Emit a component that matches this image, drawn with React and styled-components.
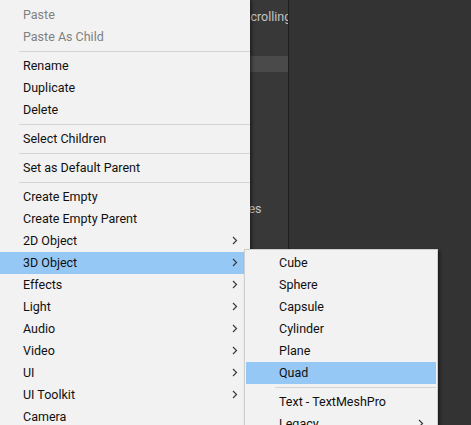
import React from "react";
import styled, { createGlobalStyle } from "styled-components";

const Global = createGlobalStyle`
  html, body {
    margin: 0;
    padding: 0;
    background: #333333;
  }
  body {
    font-family: Roboto, "Noto Sans", "Noto Sans CJK KR", sans-serif;
  }
`;

const Page = styled.div`
  position: relative;
  width: 471px;
  height: 425px;
  overflow: hidden;
  display: flex;
  background: #333333;
`;

const SidePanel = styled.div`
  width: 288px;
  flex-shrink: 0;
  background: #383838;
  border-right: 1px solid #1f1f1f;
  display: flex;
  flex-direction: column;
  color: #c4c4c4;
  font-size: 12.5px;
  overflow: hidden;
`;

const PanelLine = styled.div`
  height: ${(p) => p.h || 16}px;
  display: flex;
  align-items: center;
  padding-left: ${(p) => p.pl || 0}px;
  white-space: nowrap;
  background: ${(p) => (p.selected ? "#4a4a4a" : "transparent")};
`;

const Rest = styled.div`
  flex: 1;
  background: #333333;
`;

const Menu = styled.div`
  position: absolute;
  left: 0;
  top: 0;
  width: 250px;
  padding-top: 4px;
  background: #f2f2f2;
  box-shadow: 2px 0 3px rgba(0, 0, 0, 0.45);
  font-size: 12.5px;
  color: #101010;
`;

const SubMenu = styled.div`
  position: absolute;
  left: 244px;
  top: 249px;
  width: 190px;
  padding: 2px 1px 0 1px;
  background: #f2f2f2;
  border: 1px solid #cfcfcf;
  box-shadow: 2px 2px 3px rgba(0, 0, 0, 0.45);
  font-size: 12.5px;
  color: #101010;
`;

const Item = styled.div`
  height: 22px;
  display: flex;
  align-items: center;
  justify-content: space-between;
  padding-left: ${(p) => p.indent}px;
  padding-right: ${(p) => p.arrowGap}px;
  padding-bottom: 1px;
  box-sizing: border-box;
  background: ${(p) => (p.active ? "#96c8f6" : "transparent")};
  color: ${(p) => (p.disabled ? "#7f7f7f" : "#101010")};
  white-space: nowrap;
`;

const Separator = styled.div`
  height: 1px;
  margin: 3px 0 3px ${(p) => p.indent}px;
  background: #d4d4d4;
`;

const Chevron = () => (
  <svg width="6" height="9" viewBox="0 0 6 9">
    <path d="M1 1 L4.5 4.5 L1 8" fill="none" stroke="#3a3a3a" strokeWidth="1.2" />
  </svg>
);

const mainItems = [
  { label: "Paste", disabled: true },
  { label: "Paste As Child", disabled: true },
  "-",
  { label: "Rename" },
  { label: "Duplicate" },
  { label: "Delete" },
  "-",
  { label: "Select Children" },
  "-",
  { label: "Set as Default Parent" },
  "-",
  { label: "Create Empty" },
  { label: "Create Empty Parent" },
  { label: "2D Object", sub: true },
  { label: "3D Object", sub: true, active: true },
  { label: "Effects", sub: true },
  { label: "Light", sub: true },
  { label: "Audio", sub: true },
  { label: "Video", sub: true },
  { label: "UI", sub: true },
  { label: "UI Toolkit", sub: true },
  { label: "Camera" },
];

const subItems = [
  { label: "Cube" },
  { label: "Sphere" },
  { label: "Capsule" },
  { label: "Cylinder" },
  { label: "Plane" },
  { label: "Quad", active: true },
  "-",
  { label: "Text - TextMeshPro" },
  { label: "Legacy", sub: true },
];

const renderItems = (items, indent, arrowGap, sepIndent) =>
  items.map((it, i) =>
    it === "-" ? (
      <Separator key={i} indent={sepIndent} />
    ) : (
      <Item
        key={i}
        indent={indent}
        arrowGap={arrowGap}
        active={it.active}
        disabled={it.disabled}
      >
        <span>{it.label}</span>
        {it.sub && <Chevron />}
      </Item>
    )
  );

const App = () => {
  return (
    <>
      <Global />
      <Page>
        <SidePanel>
          <PanelLine h={8} />
          <PanelLine h={16} pl={243}>Scrolling</PanelLine>
          <PanelLine h={32} />
          <PanelLine h={16} selected />
          <PanelLine h={128} />
          <PanelLine h={16} pl={204}>Properties</PanelLine>
        </SidePanel>
        <Rest />
        <Menu>{renderItems(mainItems, 23, 12, 19)}</Menu>
        <SubMenu>{renderItems(subItems, 33, 12, 29)}</SubMenu>
      </Page>
    </>
  );
};

export default App;
